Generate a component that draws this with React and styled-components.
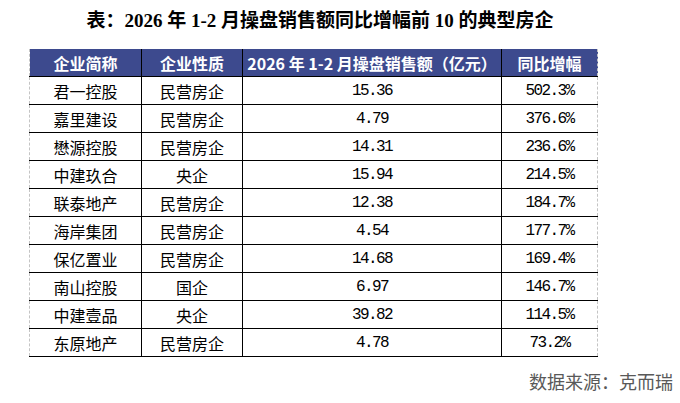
import React from 'react';
import styled, { createGlobalStyle } from 'styled-components';

const GlobalStyle = createGlobalStyle`
  body {
    margin: 0;
    background-color: #fff;
    font-family: 'Noto Sans CJK SC', sans-serif;
  }
`;

const Page = styled.div`
  width: 680px;
  height: 403px;
  overflow: hidden;
  background-color: #fff;
`;

const Title = styled.h1`
  width: 640px;
  margin: 0 0 16px 0;
  padding-top: 9px;
  height: 24px;
  line-height: 24px;
  text-align: center;
  font-family: 'Liberation Serif', 'Noto Sans CJK SC', serif;
  font-size: 19px;
  font-weight: bold;
  color: #000;
  white-space: pre;
`;

const Table = styled.table`
  margin-left: 29px;
  width: 568px;
  border-collapse: collapse;
  table-layout: fixed;
`;

const HeadCell = styled.th`
  height: 27px;
  padding: 0;
  background-color: #3d4a8e;
  color: #fff;
  font-family: 'Noto Sans CJK SC', sans-serif;
  font-size: 16px;
  font-weight: bold;
  text-align: center;
  white-space: pre;
  border-left: 1px ${(p) => (p.$first ? 'dashed #c4c4c4' : 'solid #000')};
  border-right: 1px ${(p) => (p.$last ? 'dashed #c4c4c4' : 'solid #000')};
  border-bottom: 1px solid #000;
`;

const Cell = styled.td`
  height: 27px;
  padding: 0;
  text-align: center;
  color: #000;
  font-size: 16px;
  font-family: ${(p) =>
    p.$num
      ? "'Liberation Mono', monospace"
      : "'Noto Sans CJK SC', sans-serif"};
  letter-spacing: ${(p) => (p.$num ? '-1.6px' : '0')};
  border-left: 1px ${(p) => (p.$first ? 'dashed #c4c4c4' : 'solid #000')};
  border-right: 1px ${(p) => (p.$last ? 'dashed #c4c4c4' : 'solid #000')};
  border-bottom: 1px solid #000;
`;

const Source = styled.div`
  margin-top: 12px;
  padding-right: 7px;
  text-align: right;
  font-size: 18px;
  line-height: 24px;
  color: #595959;
`;

const rows = [
  ['君一控股', '民营房企', '15.36', '502.3%'],
  ['嘉里建设', '民营房企', '4.79', '376.6%'],
  ['懋源控股', '民营房企', '14.31', '236.6%'],
  ['中建玖合', '央企', '15.94', '214.5%'],
  ['联泰地产', '民营房企', '12.38', '184.7%'],
  ['海岸集团', '民营房企', '4.54', '177.7%'],
  ['保亿置业', '民营房企', '14.68', '169.4%'],
  ['南山控股', '国企', '6.97', '146.7%'],
  ['中建壹品', '央企', '39.82', '114.5%'],
  ['东原地产', '民营房企', '4.78', '73.2%'],
];

const App = () => {
  return (
    <Page>
      <GlobalStyle />
      <Title>表：2026 年 1-2 月操盘销售额同比增幅前 10 的典型房企</Title>
      <Table>
        <colgroup>
          <col style={{ width: 112 }} />
          <col style={{ width: 101 }} />
          <col style={{ width: 259 }} />
          <col style={{ width: 96 }} />
        </colgroup>
        <thead>
          <tr>
            <HeadCell $first>企业简称</HeadCell>
            <HeadCell>企业性质</HeadCell>
            <HeadCell>2026 年 1-2 月操盘销售额（亿元）</HeadCell>
            <HeadCell $last>同比增幅</HeadCell>
          </tr>
        </thead>
        <tbody>
          {rows.map((r) => (
            <tr key={r[0]}>
              <Cell $first>{r[0]}</Cell>
              <Cell>{r[1]}</Cell>
              <Cell $num>{r[2]}</Cell>
              <Cell $num $last>
                {r[3]}
              </Cell>
            </tr>
          ))}
        </tbody>
      </Table>
      <Source>数据来源：克而瑞</Source>
    </Page>
  );
};

export default App;
